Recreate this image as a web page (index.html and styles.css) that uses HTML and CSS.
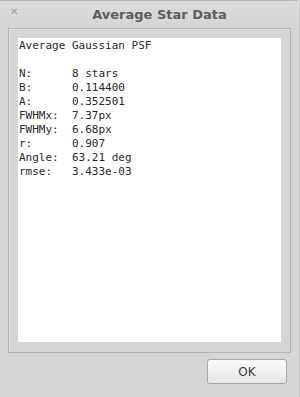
FILE: index.html
```html
<!DOCTYPE html>
<html lang="en">
<head>
    <meta charset="UTF-8">
    <title>Average Star Data</title>
    <link rel="stylesheet" href="styles.css">
</head>
<body>

<div class="window">
    <div class="titlebar">
        <span class="close">&#x2715;</span>
        <span class="title">Average Star Data</span>
    </div>

    <div class="frame">
        <pre class="report">Average Gaussian PSF

N:      8 stars
B:      0.114400
A:      0.352501
FWHMx:  7.37px
FWHMy:  6.68px
r:      0.907
Angle:  63.21 deg
rmse:   3.433e-03</pre>
    </div>

    <div class="buttons">
        <button class="ok">OK</button>
    </div>
</div>

</body>
</html>
```

FILE: styles.css
```css
html, body {
    margin: 0;
    height: 100%;
    background: #d6d6d6;
}
.window {
    height: 397px;
    box-sizing: border-box;
    border-top: 1px solid #b8b8b8;
    border-right: 1px solid #c4c4c4;
    border-radius: 0 5px 0 0;
    background: #d6d6d6;
}
.titlebar {
    height: 27px;
    display: flex;
    align-items: center;
    position: relative;
    background: linear-gradient(#dcdcdc, #d6d6d6);
}
.close {
    position: absolute;
    left: 10px;
    top: 5px;
    font-family: "DejaVu Sans", sans-serif;
    font-size: 10px;
    font-weight: bold;
    color: #9a9a9a;
}
.title {
    flex: 1;
    text-align: center;
    padding-left: 20px;
    font-family: "DejaVu Sans", sans-serif;
    font-size: 13px;
    font-weight: bold;
    color: #5e5e5e;
}
.frame {
    margin: 0 8px;
    height: 325px;
    box-sizing: border-box;
    border: 1px solid #b4b4b4;
    box-shadow: inset 1px 1px 0 #e0e0e0;
    padding: 9px 9px 10px 9px;
}
.report {
    margin: 0;
    height: 100%;
    box-sizing: border-box;
    background: #fff;
    padding: 1px 1px;
    font-family: "DejaVu Sans Mono", monospace;
    font-size: 11px;
    line-height: 14px;
    color: #2a2a2a;
}
.buttons {
    display: flex;
    justify-content: flex-end;
    padding: 6px 12px 0 0;
}
.ok {
    width: 80px;
    height: 25px;
    border: 1px solid #a6a6a6;
    border-radius: 3px;
    background: linear-gradient(#fbfbfb, #e6e6e6);
    font-family: "DejaVu Sans", sans-serif;
    font-size: 12px;
    color: #3a3a3a;
    cursor: pointer;
}
```
